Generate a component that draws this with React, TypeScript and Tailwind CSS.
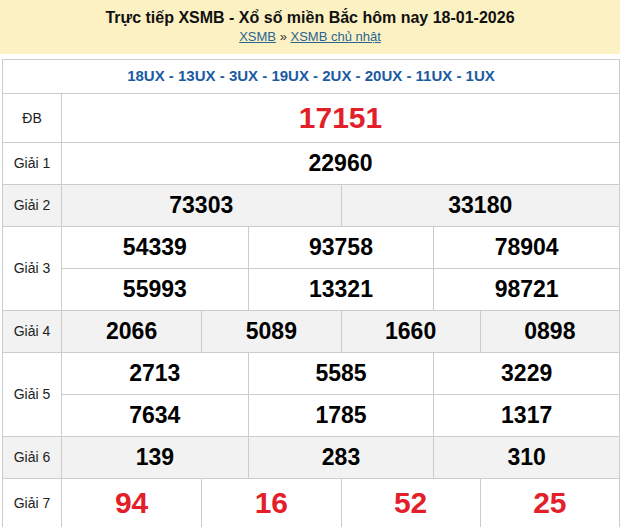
import React from "react";

const font = { fontFamily: "'Liberation Sans', Arial, sans-serif" };

function Num({ v, red, big }: { v: string; red?: boolean; big?: boolean }) {
  return (
    <span
      className={
        (red ? "text-[#e3202a] " : "text-black ") +
        (big ? "text-[30px] " : "text-[23px] ") +
        "font-bold leading-none"
      }
    >
      {v}
    </span>
  );
}

function Label({ children }: { children: React.ReactNode }) {
  return (
    <div className="w-[59px] shrink-0 border-r border-[#cccccc] flex items-center justify-center text-[14px] text-[#222]">
      {children}
    </div>
  );
}

function Cells({
  values,
  cols,
  red,
  big,
  h = "h-[41px]",
}: {
  values: string[];
  cols: string;
  red?: boolean;
  big?: boolean;
  h?: string;
}) {
  return (
    <div className={"grid " + cols}>
      {values.map((v, i) => (
        <div
          key={i}
          className={
            h +
            " flex items-center justify-center " +
            (i > 0 ? "border-l border-[#cccccc]" : "")
          }
        >
          <Num v={v} red={red} big={big} />
        </div>
      ))}
    </div>
  );
}

export default function App() {
  return (
    <div className="w-[620px] bg-white" style={font}>
      <div className="h-[54px] bg-[#fcf1c3] pt-[8px] text-center">
        <div className="text-[16px] font-bold leading-[20px] text-[#111]">
          Trực tiếp XSMB - Xổ số miền Bắc hôm nay 18-01-2026
        </div>
        <div className="text-[13px] leading-[18px] text-[#333]">
          <span className="underline text-[#2a6595]">XSMB</span>
          <span className="text-[#333]"> » </span>
          <span className="underline text-[#2a6595]">XSMB chủ nhật</span>
        </div>
      </div>

      <div className="ml-[2px] mt-[5px] w-[618px] border border-[#cccccc]">
        <div className="h-[33px] flex items-center justify-center text-[15px] font-bold text-[#1b5ba2]">
          18UX - 13UX - 3UX - 19UX - 2UX - 20UX - 11UX - 1UX
        </div>

        <div className="flex border-t border-[#cccccc]">
          <Label>ĐB</Label>
          <div className="flex-1">
            <Cells values={["17151"]} cols="grid-cols-1" red big h="h-[48px]" />
          </div>
        </div>

        <div className="flex border-t border-[#cccccc]">
          <Label>Giải 1</Label>
          <div className="flex-1">
            <Cells values={["22960"]} cols="grid-cols-1" />
          </div>
        </div>

        <div className="flex border-t border-[#cccccc] bg-[#f2f2f2]">
          <Label>Giải 2</Label>
          <div className="flex-1">
            <Cells values={["73303", "33180"]} cols="grid-cols-2" />
          </div>
        </div>

        <div className="flex border-t border-[#cccccc]">
          <Label>Giải 3</Label>
          <div className="flex-1">
            <Cells values={["54339", "93758", "78904"]} cols="grid-cols-3" />
            <div className="border-t border-[#cccccc]">
              <Cells values={["55993", "13321", "98721"]} cols="grid-cols-3" />
            </div>
          </div>
        </div>

        <div className="flex border-t border-[#cccccc] bg-[#f2f2f2]">
          <Label>Giải 4</Label>
          <div className="flex-1">
            <Cells values={["2066", "5089", "1660", "0898"]} cols="grid-cols-4" />
          </div>
        </div>

        <div className="flex border-t border-[#cccccc]">
          <Label>Giải 5</Label>
          <div className="flex-1">
            <Cells values={["2713", "5585", "3229"]} cols="grid-cols-3" />
            <div className="border-t border-[#cccccc]">
              <Cells values={["7634", "1785", "1317"]} cols="grid-cols-3" />
            </div>
          </div>
        </div>

        <div className="flex border-t border-[#cccccc] bg-[#f2f2f2]">
          <Label>Giải 6</Label>
          <div className="flex-1">
            <Cells values={["139", "283", "310"]} cols="grid-cols-3" />
          </div>
        </div>

        <div className="flex border-t border-[#cccccc]">
          <Label>Giải 7</Label>
          <div className="flex-1">
            <Cells values={["94", "16", "52", "25"]} cols="grid-cols-4" red big h="h-[48px]" />
          </div>
        </div>
      </div>
    </div>
  );
}
